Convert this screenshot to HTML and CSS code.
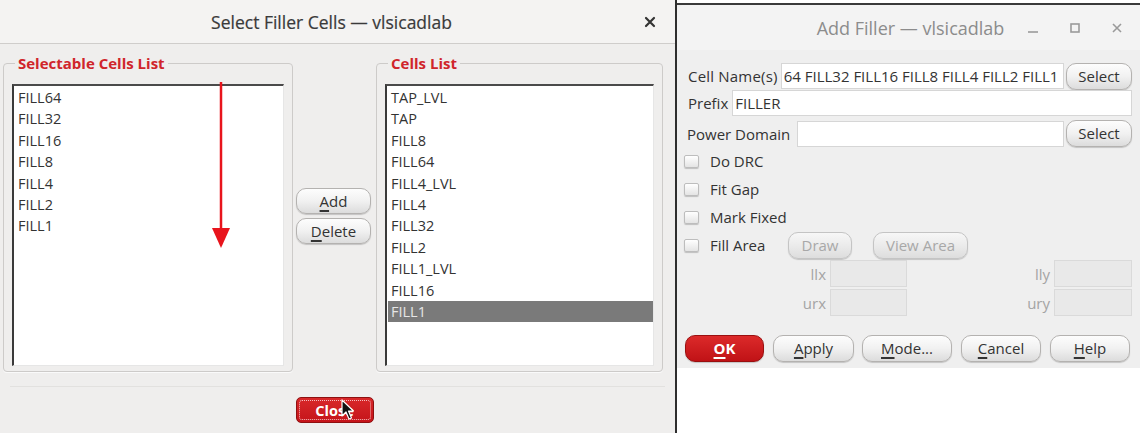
FILE: index.html
```html
<!DOCTYPE html>
<html>
<head>
<meta charset="utf-8">
<link rel="stylesheet" href="styles.css">
</head>
<body>
<div class="screen">
  <div class="dlg-left">
    <div class="titlebar">
      <span></span>
      <span class="title">Select Filler Cells — vlsicadlab</span>
      <span class="close-x"><svg width="12" height="12" viewBox="0 0 12 12"><path d="M2 2 L10 10 M10 2 L2 10" stroke="#333" stroke-width="2.2" stroke-linecap="round"/></svg></span>
    </div>
    <div class="lbody">
      <div class="groups">
        <fieldset class="group g1">
          <legend>Selectable Cells List</legend>
          <div class="listbox">
            <div class="item">FILL64</div>
            <div class="item">FILL32</div>
            <div class="item">FILL16</div>
            <div class="item">FILL8</div>
            <div class="item">FILL4</div>
            <div class="item">FILL2</div>
            <div class="item">FILL1</div>
          </div>
        </fieldset>
        <div class="mid">
          <button class="btn"><u>A</u>dd</button>
          <button class="btn"><u>D</u>elete</button>
        </div>
        <fieldset class="group g2">
          <legend>Cells List</legend>
          <div class="listbox">
            <div class="item">TAP_LVL</div>
            <div class="item">TAP</div>
            <div class="item">FILL8</div>
            <div class="item">FILL64</div>
            <div class="item">FILL4_LVL</div>
            <div class="item">FILL4</div>
            <div class="item">FILL32</div>
            <div class="item">FILL2</div>
            <div class="item">FILL1_LVL</div>
            <div class="item">FILL16</div>
            <div class="item selected">FILL1</div>
          </div>
        </fieldset>
      </div>
      <div class="sep"></div>
      <div class="close-row">
        <button class="btn-close"><span class="focus">Close</span></button>
      </div>
    </div>
    <svg class="red-arrow" width="24" height="170" viewBox="0 0 24 170">
      <line x1="12" y1="0" x2="12" y2="150" stroke="#e8141c" stroke-width="2.5"/>
      <polygon points="3,146 21,146 12,166" fill="#e8141c"/>
    </svg>
    <svg class="cursor" width="14" height="22" viewBox="0 0 14 22">
      <path d="M1 1 L1 17 L5 13 L8 20 L10.5 19 L7.5 12 L12.5 12 Z" fill="#111" stroke="#fff" stroke-width="1.2" stroke-linejoin="round"/>
    </svg>
  </div>

  <div class="right-area">
    <div class="rwin">
      <div class="rtitle">
        <span></span>
        <span class="rt-text">Add Filler — vlsicadlab</span>
        <span class="ctrls">
          <svg width="14" height="14" viewBox="0 0 14 14"><line x1="2" y1="11" x2="12" y2="11" stroke="#9a9a9a" stroke-width="1.6"/></svg>
          <svg width="14" height="14" viewBox="0 0 14 14"><rect x="3" y="3" width="8" height="8" fill="none" stroke="#9a9a9a" stroke-width="1.6"/></svg>
          <svg width="14" height="14" viewBox="0 0 14 14"><path d="M3 3 L11 11 M11 3 L3 11" stroke="#9a9a9a" stroke-width="1.6"/></svg>
        </span>
      </div>
      <div class="rbody">
        <div class="row r1">
          <span class="lbl">Cell Name(s)</span>
          <div class="input">64 FILL32 FILL16 FILL8 FILL4 FILL2 FILL1</div>
          <button class="btn sel">Select</button>
        </div>
        <div class="row r2">
          <span class="lbl">Prefix</span>
          <div class="input">FILLER</div>
        </div>
        <div class="row r3">
          <span class="lbl">Power Domain</span>
          <div class="input"></div>
          <button class="btn sel">Select</button>
        </div>
        <div class="crow"><span class="cb"></span><span class="clbl">Do DRC</span></div>
        <div class="crow"><span class="cb"></span><span class="clbl">Fit Gap</span></div>
        <div class="crow"><span class="cb"></span><span class="clbl">Mark Fixed</span></div>
        <div class="crow"><span class="cb"></span><span class="clbl fixed">Fill Area</span>
          <button class="btn dis draw">Draw</button>
          <button class="btn dis view">View Area</button>
        </div>
        <div class="coords">
          <span class="clabel">llx</span><div class="cin"></div>
          <span class="clabel">lly</span><div class="cin"></div>
          <span class="clabel">urx</span><div class="cin"></div>
          <span class="clabel">ury</span><div class="cin"></div>
        </div>
        <div class="brow">
          <button class="btn ok"><u>O</u>K</button>
          <button class="btn b-apply"><u>A</u>pply</button>
          <button class="btn b-mode"><u>M</u>ode...</button>
          <button class="btn b-cancel"><u>C</u>ancel</button>
          <button class="btn b-help"><u>H</u>elp</button>
        </div>
      </div>
    </div>
  </div>
</div>
</body>
</html>
```

FILE: styles.css
```css
* { box-sizing: border-box; }
html, body { margin: 0; padding: 0; }
body {
  width: 1140px;
  height: 433px;
  overflow: hidden;
  background: #ffffff;
  font-family: "Open Sans", "Noto Sans", "DejaVu Sans", sans-serif;
  color: #333;
}
.screen {
  display: flex;
  width: 1140px;
  height: 433px;
}

/* ---------- left dialog ---------- */
.dlg-left {
  position: relative;
  width: 675px;
  height: 433px;
  background: #efeeed;
  flex: none;
}
.titlebar {
  height: 44px;
  background: #f4f3f2;
  border-bottom: 1px solid #cfcdcb;
  display: grid;
  grid-template-columns: 44px 1fr 44px;
  align-items: center;
}
.title {
  text-align: center;
  font-size: 17.5px;
  font-weight: 500;
  color: #3a3a3a;
  padding-right: 12px;
  -webkit-text-stroke: 0.2px #3a3a3a;
}
.close-x {
  display: flex;
  justify-content: center;
  padding-right: 6px;
}
.lbody {
  padding-top: 10px;
}
.groups {
  display: flex;
  align-items: flex-start;
}
.group {
  margin: 0;
  border: 1px solid #cdcbc9;
  border-radius: 4px;
  padding: 12px 8px 5px 8px;
  height: 318px;
  box-shadow: 0 1px 0 #fafafa;
}
.group legend {
  font-size: 15px;
  line-height: 18px;
  font-weight: 700;
  color: #d0252b;
  padding: 0 3px;
  margin-left: 3px;
}
.g1 { margin-left: 3px; width: 290px; }
.g2 { width: 287px; }
.listbox {
  height: 282px;
  background: #fff;
  border-top: 2px solid #4a4a4a;
  border-left: 2px solid #3a3a3a;
  border-right: 1px solid #e6e6e6;
  border-bottom: 1px solid #e6e6e6;
  padding-top: 1px;
  padding-left: 1px;
}
.item {
  font-size: 14.5px;
  line-height: 21.4px;
  height: 21.4px;
  padding-left: 3px;
  color: #333;
}
.item.selected {
  background: #7a7a7a;
  color: #e6e6e6;
}
.mid {
  width: 83px;
  padding-top: 134px;
  padding-left: 3px;
  display: flex;
  flex-direction: column;
  gap: 4px;
}
.btn {
  font-family: "Open Sans", "Noto Sans", "DejaVu Sans", sans-serif;
  font-size: 15px;
  color: #333;
  border: 1px solid #b4b2b0;
  border-radius: 10px;
  background: linear-gradient(#fdfdfd, #f1f1f1 50%, #dcdcdc);
  box-shadow: 0 1px 1px rgba(0,0,0,0.18);
  padding: 0;
  display: flex;
  align-items: center;
  justify-content: center;
  line-height: 1;
}
.btn u { text-decoration-thickness: 1.5px; text-underline-offset: 3px; }
.mid .btn { width: 75px; height: 26px; }
.sep {
  margin: 14px 10px 0 10px;
  height: 1px;
  background: #e2e1df;
}
.close-row {
  display: flex;
  justify-content: center;
  padding-top: 10px;
  padding-right: 6px;
}
.btn-close {
  width: 78px;
  height: 26px;
  border: 1px solid #8e1010;
  border-radius: 5px;
  background: linear-gradient(#d8282a, #c5141a);
  padding: 2px;
  display: flex;
}
.btn-close .focus {
  flex: 1;
  border: 1px dotted #f4c0c0;
  border-radius: 3px;
  color: #fff;
  font-family: "Open Sans", "Noto Sans", sans-serif;
  font-weight: 700;
  font-size: 14.5px;
  display: flex;
  align-items: center;
  justify-content: center;
}
.red-arrow {
  position: absolute;
  left: 209px;
  top: 82px;
}
.cursor {
  position: absolute;
  left: 341px;
  top: 399px;
}

/* ---------- right dialog ---------- */
.right-area {
  flex: 1;
  border-left: 2px solid #2e2e2e;
  padding-top: 3px;
  background: #fff;
}
.rwin {
  border-top: 2px solid #3a3a3a;
  background: #efefef;
}
.rtitle {
  height: 45px;
  background: #f3f3f3;
  border-top-left-radius: 8px;
  display: grid;
  grid-template-columns: 120px 1fr 120px;
  align-items: center;
}
.rt-text {
  text-align: center;
  font-size: 18px;
  color: #8c8c8c;
  padding-left: 4px;
}
.ctrls {
  display: flex;
  justify-content: flex-end;
  gap: 28px;
  padding-right: 16px;
  align-items: center;
}
.rbody {
  padding: 12px 8px 6px 0;
  font-size: 15px;
}
.row {
  display: flex;
  align-items: center;
  padding-left: 11px;
}
.r1 { height: 28px; }
.r2 { height: 26px; }
.r3 { height: 27px; margin-top: 4px; padding-left: 10px; }
.lbl {
  font-size: 15px;
  color: #333;
  white-space: nowrap;
}
.r1 .lbl { letter-spacing: 0.2px; }
.input {
  flex: 1;
  height: 26px;
  background: #fff;
  border: 1px solid #d6d6d6;
  font-size: 15px;
  line-height: 24px;
  padding-left: 2px;
  white-space: nowrap;
  overflow: hidden;
  color: #333;
}
.r1 .input { margin-left: 3px; }
.r2 .input { margin-left: 4px; }
.r3 .input { margin-left: 7px; }
.btn.sel {
  width: 66px;
  height: 27px;
  margin-left: 2px;
}
.crow {
  height: 28px;
  display: flex;
  align-items: center;
  padding-left: 7px;
}
.cb {
  width: 15px;
  height: 13px;
  border: 1px solid #bdbdbd;
  border-radius: 2px;
  background: linear-gradient(#ffffff, #e4e4e4);
  box-shadow: 0 1px 1px rgba(0,0,0,0.2);
  flex: none;
}
.clbl {
  margin-left: 11px;
  font-size: 15px;
  color: #333;
}
.clbl.fixed { width: 78px; }
.btn.dis {
  color: #a8a8a8;
  height: 27px;
  border-color: #c4c4c4;
  background: linear-gradient(#f7f7f7, #ebebeb 50%, #dddddd);
}
.draw { width: 64px; }
.view { width: 95px; margin-left: 21px; }
.coords {
  margin-top: 1px;
  padding-left: 11px;
  display: grid;
  grid-template-columns: 138px 77px 1fr 78px;
  grid-auto-rows: 27px;
  column-gap: 4px;
  row-gap: 2px;
}
.clabel {
  text-align: right;
  color: #a4a4a4;
  font-size: 15px;
  align-self: center;
}
.cin {
  background: #e9e9e9;
  border: 1px solid #dadada;
}
.brow {
  margin-top: 19px;
  padding-left: 8px;
  display: flex;
  gap: 9px;
  height: 27px;
}
.brow .btn { height: 27px; }
.btn.ok {
  width: 79px;
  border-color: #9a1010;
  background: linear-gradient(#dc2a2a, #c01216);
  color: #fff;
  font-weight: 700;
}
.b-apply { width: 81px; }
.b-mode { width: 90px; margin-left: -1px; }
.b-cancel { width: 80px; }
.b-help { width: 80px; }
```
